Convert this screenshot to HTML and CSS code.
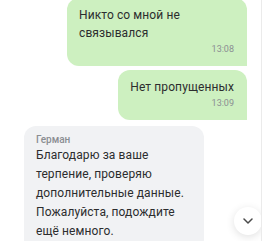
FILE: index.html
```html
<!DOCTYPE html>
<html lang="ru">
<head>
    <meta charset="UTF-8">
    <meta name="viewport" content="width=device-width, initial-scale=1.0">
    <title>Чат</title>
    <link rel="stylesheet" href="styles.css">
</head>
<body>
    <div class="chat">
        <div class="messages">
            <div class="msg msg-out msg-first">
                <div class="msg-text">Никто со мной не связывался</div>
                <div class="msg-time">13:08</div>
            </div>
            <div class="msg msg-out">
                <div class="msg-text">Нет пропущенных</div>
                <div class="msg-time">13:09</div>
            </div>
            <div class="msg msg-in">
                <div class="msg-author">Герман</div>
                <div class="msg-text">Благодарю за ваше терпение, проверяю дополнительные данные. Пожалуйста, подождите ещё немного.</div>
            </div>
        </div>
        <button class="scroll-down" title="Вниз">
            <svg width="10" height="6" viewBox="0 0 10 6"><path d="M1 1l4 4 4-4" fill="none" stroke="#4a4a4a" stroke-width="1.5" stroke-linecap="round" stroke-linejoin="round"/></svg>
        </button>
    </div>
</body>
</html>
```

FILE: styles.css
```css
body {
    margin: 0;
    padding: 0;
    background-color: #fff;
    font-family: Roboto, "Noto Sans", sans-serif;
    color: #2c2d2e;
}

.chat {
    position: relative;
    width: 261px;
    height: 241px;
    overflow: hidden;
    border-right: 1px solid #ebebeb;
}

.messages {
    display: flex;
    flex-direction: column;
    gap: 4px;
    padding: 0 14px 0 24px;
    margin-top: -2px;
}

.msg {
    max-width: 180px;
    box-sizing: border-box;
    padding: 8px 13px 10px 12px;
    border-radius: 12px;
}

.msg-out {
    align-self: flex-end;
    background-color: #cdf0c0;
    border-bottom-right-radius: 0;
}

.msg-in {
    align-self: flex-start;
    margin-top: 2px;
    width: 180px;
    background-color: #f1f2f4;
    border-bottom-left-radius: 0;
}

.msg-text {
    font-size: 12px;
    letter-spacing: 0.1px;
    line-height: 18px;
}

.msg-in .msg-text {
    line-height: 19px;
}

.msg-time {
    font-size: 9px;
    line-height: 14px;
    color: #8b8e93;
    text-align: right;
}

.msg-author {
    font-size: 10px;
    line-height: 12px;
    font-weight: 500;
    color: #8b8e93;
}

.scroll-down {
    position: absolute;
    right: -1px;
    top: 207px;
    width: 28px;
    height: 28px;
    border: none;
    border-radius: 50%;
    padding: 0;
    background-color: #fff;
    box-shadow: 0 2px 8px rgba(0, 0, 0, 0.12);
    display: flex;
    align-items: center;
    justify-content: center;
    cursor: pointer;
}
```
